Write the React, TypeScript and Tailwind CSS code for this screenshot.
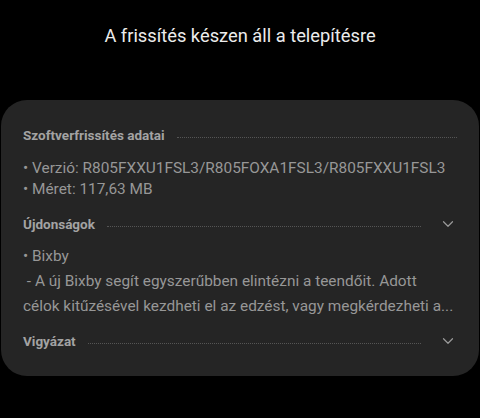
import { ChevronDown } from "lucide-react"

function SectionHeader({ title, chevron }: { title: string; chevron?: boolean }) {
  return (
    <div className="flex items-center h-[22px]">
      <span className="text-[13.5px] font-bold text-[#a3a3a3] whitespace-nowrap">{title}</span>
      <div className={`flex-1 ml-3 border-b border-dotted border-[#555555] mt-[4px] ${chevron ? "mr-[18px]" : ""}`} />
      {chevron && <ChevronDown className="w-[18px] h-[18px] text-[#9a9a9a]" strokeWidth={1.6} />}
    </div>
  )
}

function App() {
  return (
    <div className="w-[480px] h-[418px] bg-black overflow-hidden" style={{ fontFamily: "Roboto, 'Noto Sans', sans-serif" }}>
      <h1 className="text-center text-[18.3px] text-[#ececec] pt-[22px] h-[100px]">
        A frissítés készen áll a telepítésre
      </h1>

      <div className="mx-[1px] rounded-[26px] bg-[#252525] pl-[22px] pr-[22px] pt-[24px] h-[276px]">
        <SectionHeader title="Szoftverfrissítés adatai" />
        <div className="mt-[12px] text-[15.4px] leading-[21px] text-[#979797]">
          <p>• Verzió: R805FXXU1FSL3/R805FOXA1FSL3/R805FXXU1FSL3</p>
          <p>• Méret: 117,63 MB</p>
        </div>

        <div className="mt-[13px]">
          <SectionHeader title="Újdonságok" chevron />
        </div>
        <div className="mt-[9px] text-[15.4px] leading-[25px] text-[#979797]">
          <p>• Bixby</p>
          <p className="truncate">{"\u00a0- A új Bixby segít egyszerűbben elintézni a teendőit. Adott"}</p>
          <p className="truncate">célok kitűzésével kezdheti el az edzést, vagy megkérdezheti a...</p>
        </div>

        <div className="mt-[11px]">
          <SectionHeader title="Vigyázat" chevron />
        </div>
      </div>
    </div>
  )
}

export default App
